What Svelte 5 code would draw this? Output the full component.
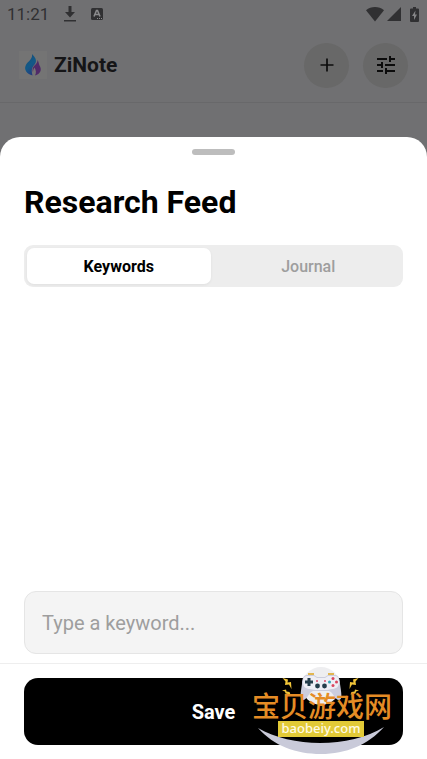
<script lang="ts">
  type Tab = "keywords" | "journal";

  const tabs: { id: Tab; label: string }[] = [
    { id: "keywords", label: "Keywords" },
    { id: "journal", label: "Journal" },
  ];

  let activeTab = $state<Tab>("keywords");
  let keyword = $state("");
</script>

<div class="app">
  <div class="status-bar">
    <div class="status-group">
      <span class="clock">11:21</span>
      <svg width="14" height="16" viewBox="0 0 14 16">
        <path d="M5.5 0h3v6h3.5L7 11.5 2 6h3.5zM1 14h12v1.5H1z" fill="currentColor" />
      </svg>
      <svg width="12" height="12" viewBox="0 0 12 12">
        <rect width="12" height="12" rx="1.5" fill="currentColor" />
        <path
          d="M3 8.5l2.5-6h1l2.5 6M4 6.5h4"
          fill="none"
          stroke="#8a8a8c"
          stroke-width="1.6"
        />
        <path d="M6 10.5h1M8 10.5h1M10 10.5h1" stroke="#8a8a8c" />
      </svg>
    </div>
    <div class="status-group right">
      <svg width="18" height="15" viewBox="0 0 18 15">
        <path d="M0 3.2C5-1 13-1 18 3.2L9 14.5z" fill="currentColor" />
      </svg>
      <svg class="signal" width="14" height="14" viewBox="0 0 14 14">
        <path d="M14 0v14H0z" fill="currentColor" />
      </svg>
      <svg width="9" height="15" viewBox="0 0 9 15">
        <path
          d="M3 0h3v1.5h2q1 0 1 1V14q0 1-1 1H1q-1 0-1-1V2.5q0-1 1-1h2z"
          fill="currentColor"
        />
        <path d="M5.5 3.5L2 9h2v4l3-5.5H5z" fill="#858587" />
      </svg>
    </div>
  </div>

  <header class="header">
    <div class="brand">
      <svg width="28" height="28" viewBox="0 0 28 28">
        <defs>
          <linearGradient id="flame" x1="0" y1="0" x2="0.5" y2="1">
            <stop offset="0" stop-color="#194872" />
            <stop offset="0.6" stop-color="#125a88" />
            <stop offset="1" stop-color="#243c7c" />
          </linearGradient>
        </defs>
        <rect width="28" height="28" fill="#747474" />
        <path
          d="M13 3c3 3 5 6 3.5 9-1 2-3 3.500-3.500 6-.5 2 0 4 .5 6.500C8 23 5 19 6.500 15c1-3 3-4 5-6.500 1.500-2 1.800-3.500 1.500-5.500z"
          fill="url(#flame)"
        />
        <path
          d="M18.500 9c1.500 2 1 3.500 2 5.500 2.500 4 1.500 8-4.500 10 1.500-3 1-5-.5-8-1 1.500-1.500 3-1.500 5-1-3-.5-5 1.500-7 2-1.800 3-3 3-5.500z"
          fill="#502a69"
        />
      </svg>
      <span class="brand-name">ZiNote</span>
    </div>
    <div class="actions">
      <button class="icon-btn" aria-label="Add">
        <svg width="24" height="24" viewBox="0 0 24 24">
          <path d="M12 5.5v13M5.5 12h13" stroke="currentColor" stroke-width="1.7" />
        </svg>
      </button>
      <button class="icon-btn" aria-label="Filters">
        <svg width="24" height="24" viewBox="0 0 24 24">
          <path
            d="M3 17v2h6v-2H3zM3 5v2h10V5H3zm10 16v-2h8v-2h-8v-2h-2v6h2zM7 9v2H3v2h4v2h2V9H7zm14 4v-2H11v2h10zm-6-4h2V7h4V5h-4V3h-2v6z"
            fill="currentColor"
          />
        </svg>
      </button>
    </div>
  </header>

  <section class="sheet" aria-label="Research Feed">
    <div class="handle"></div>
    <div class="content">
      <h1>Research Feed</h1>
      <div class="tabs" role="tablist">
        {#each tabs as tab (tab.id)}
          <button
            class="tab"
            class:active={activeTab === tab.id}
            role="tab"
            aria-selected={activeTab === tab.id}
            onclick={() => (activeTab = tab.id)}
          >
            {tab.label}
          </button>
        {/each}
      </div>
      <input
        class="keyword"
        type="text"
        placeholder="Type a keyword..."
        aria-label="Keyword"
        bind:value={keyword}
      />
    </div>
    <footer class="footer">
      <button class="save">Save</button>
    </footer>
  </section>

  <svg class="site-mark" width="146" height="92" viewBox="0 0 146 92">
    <circle cx="71" cy="21" r="19" fill="#eeeef0" />
    <path
      d="M8 63C42 83 100 83 134 62 118 80 96 89 71 89S24 81 8 63z"
      fill="#c9cad9"
    />
    <path d="M58 9h6M78 9h6" stroke="#e2b650" stroke-width="2" />
    <path
      d="M57 10h7l3 2h8l3-2h7c4 0 5 5 5 9 1 7 3 16-1 16-4 0-6-8-10-9H63c-4 1-6 9-10 9s-2-9-1-16c0-4 1-9 5-9z"
      fill="#cccddd"
    />
    <path
      d="M57 11h7l3 2h8l3-2h7c3 0 4 3 4 6 0 5-3 7-7 7l-5 1H65l-5-1c-4 0-7-2-7-7 0-3 1-6 4-6z"
      fill="#eeeef5"
    />
    <path d="M59 13v8M55 17h8" stroke="#243d4b" stroke-width="3" />
    <g fill="#243d4b">
      <circle cx="67.500" cy="21" r="2.400" />
      <circle cx="74.500" cy="21" r="2.400" />
    </g>
    <path d="M66 16h2M74 16h2" stroke="#d84f6c" stroke-width="1.500" />
    <circle cx="83" cy="13.500" r="1.500" fill="#d9465f" />
    <circle cx="83" cy="20.500" r="1.500" fill="#d9465f" />
    <circle cx="79.500" cy="17" r="1.500" fill="#36a5b6" />
    <circle cx="86.500" cy="17" r="1.500" fill="#d9465f" />
    <g fill="#f1c539">
      <path d="M32.500 13l5.500 1.500-.5 3 3.500-.5.500 7-2.500-4.500-4 .5.500-3.500z" />
      <path d="M108.500 13L103 14.500l.5 3-3.500-.5-.5 7 2.500-4.500 4 .5-.5-3.500z" />
      <path d="M32 25.500l4-1 .5 2 3 .5 1 2.500-5-1-.5-2z" />
      <path d="M109 25.500l-4-1-.5 2-3 .5-1 2.500 5-1 .5-2z" />
    </g>
    <text class="mark-name" x="2" y="52">宝贝游戏网</text>
    <rect x="28" y="56" width="86" height="16" fill="#e2ca37" />
    <text class="mark-url" x="71" y="68" text-anchor="middle">baobeiy.com</text>
  </svg>
</div>

<style>
  :global(body) {
    margin: 0;
    background: #707072;
  }

  .app {
    position: relative;
    display: flex;
    flex-direction: column;
    min-height: 100vh;
    background: #707072;
    color: #151517;
    font-family: Roboto, "Liberation Sans", sans-serif;
  }

  .app * {
    box-sizing: border-box;
  }

  svg {
    display: block;
    flex-shrink: 0;
  }

  button,
  input {
    margin: 0;
    font-family: inherit;
  }

  button {
    padding: 0;
    border: none;
    cursor: pointer;
  }

  .status-bar {
    display: flex;
    align-items: center;
    justify-content: space-between;
    height: 28px;
    padding: 0 8px 0 7px;
    color: #303032;
  }

  .status-group {
    display: flex;
    align-items: center;
    gap: 14px;
  }

  .status-group.right {
    gap: 3px;
  }

  .clock {
    font-size: 17px;
    line-height: 28px;
  }

  .signal {
    margin-right: 6px;
  }

  .header {
    display: flex;
    align-items: center;
    justify-content: space-between;
    height: 75px;
    padding: 0 19px;
    border-bottom: 1px solid #68686a;
  }

  .brand {
    display: flex;
    align-items: center;
    gap: 7px;
  }

  .brand-name {
    font-size: 21px;
    font-weight: 700;
    line-height: 28px;
  }

  .actions {
    display: flex;
    gap: 14px;
  }

  .icon-btn {
    display: grid;
    place-items: center;
    width: 45px;
    height: 45px;
    border-radius: 50%;
    background: #686868;
    color: #0c0c0c;
  }

  .sheet {
    display: flex;
    flex: 1;
    flex-direction: column;
    margin-top: 34px;
    border-radius: 20px 20px 0 0;
    background: #fff;
  }

  .handle {
    width: 43px;
    height: 6px;
    margin: 12px auto 0;
    border-radius: 3px;
    background: #bdbdbd;
  }

  .content {
    display: flex;
    flex: 1;
    flex-direction: column;
    padding: 27px 24px 9px;
  }

  h1 {
    margin: 0;
    color: #000;
    font-size: 32px;
    font-weight: 700;
    line-height: 40px;
  }

  .tabs {
    display: grid;
    grid-template-columns: 1fr 1fr;
    gap: 6px;
    height: 42px;
    margin: 23px 0;
    padding: 3px;
    border-radius: 9px;
    background: #ededed;
  }

  .tab {
    border-radius: 7px;
    background: transparent;
    color: #9e9e9e;
    font-size: 16px;
    font-weight: 500;
  }

  .tab.active {
    background: #fff;
    color: #000;
    font-weight: 700;
    box-shadow: 0 1px 3px rgba(0, 0, 0, 0.06);
  }

  .keyword {
    width: 100%;
    height: 63px;
    margin-top: auto;
    padding: 0 17px;
    border: 1px solid #e5e5e5;
    border-radius: 12px;
    background: #f4f4f4;
    color: #000;
    font-size: 20px;
  }

  .keyword::placeholder {
    color: #9e9e9e;
    opacity: 1;
  }

  .footer {
    padding: 14px 24px;
    border-top: 1px solid #eee;
  }

  .save {
    display: block;
    width: 100%;
    height: 67px;
    border-radius: 14px;
    background: #000;
    color: #fff;
    font-size: 20px;
    font-weight: 700;
  }

  .site-mark {
    position: absolute;
    right: 31px;
    bottom: 2px;
    pointer-events: none;
  }

  .mark-name {
    fill: #e58c25;
    font-family: "Noto Sans CJK SC", sans-serif;
    font-size: 28px;
    font-weight: 500;
  }

  .mark-url {
    fill: #fffbe4;
    font-family: "Noto Sans", sans-serif;
    font-size: 13px;
    font-weight: 500;
  }
</style>
